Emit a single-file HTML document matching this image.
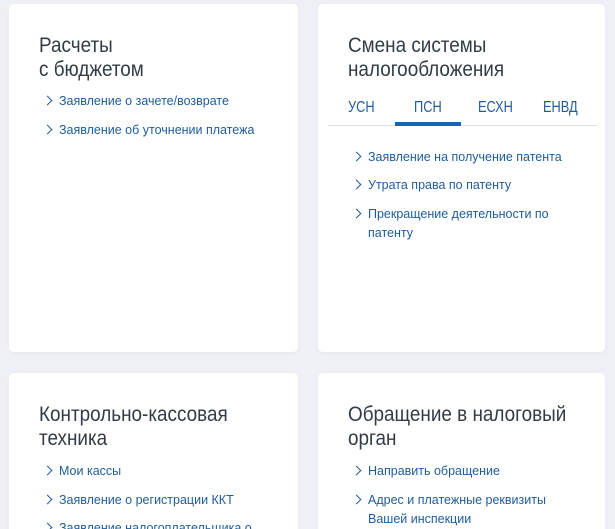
<!DOCTYPE html>
<html><head><meta charset="utf-8"><style>
*{margin:0;padding:0;box-sizing:border-box}
html,body{width:615px;height:529px;overflow:hidden}
body{background:#eef0f5;position:relative;font-family:"Liberation Sans",sans-serif}
.card{position:absolute;background:#fff;border-radius:5px;box-shadow:0 1px 4px rgba(0,0,0,.04)}
h2{position:absolute;font-weight:normal;font-size:21px;line-height:24px;color:#333c46;transform:scaleX(0.9);transform-origin:0 0;white-space:nowrap}
.l{position:absolute;font-size:12.5px;line-height:19px;color:#1f5c9b;white-space:nowrap}
.l:before{content:"";position:absolute;left:-15px;top:5px;width:6px;height:6px;border-right:1.4px solid #1f5c9b;border-top:1.4px solid #1f5c9b;transform:rotate(45deg)}
.tab{position:absolute;top:99px;font-size:16px;color:#1f5c9b;transform:scaleX(0.8);transform-origin:0 0}
</style></head><body>
<div class="card" style="left:9px;top:4px;width:289px;height:348px"></div>
<div class="card" style="left:318px;top:4px;width:287px;height:348px"></div>
<div class="card" style="left:9px;top:373px;width:289px;height:170px"></div>
<div class="card" style="left:318px;top:373px;width:287px;height:170px"></div>

<h2 style="left:39px;top:34px">Расчеты<br>с бюджетом</h2>
<div class="l" style="left:59px;top:92px">Заявление о зачете/возврате</div>
<div class="l" style="left:59px;top:121px">Заявление об уточнении платежа</div>

<h2 style="left:348px;top:34px">Смена системы<br>налогообложения</h2>
<div class="tab" style="left:348px">УСН</div>
<div class="tab" style="left:414px">ПСН</div>
<div class="tab" style="left:478px">ЕСХН</div>
<div class="tab" style="left:543px">ЕНВД</div>
<div style="position:absolute;left:328px;top:125px;width:269px;height:1px;background:#dcdfe3"></div>
<div style="position:absolute;left:395px;top:122px;width:66px;height:4px;background:#1565b0"></div>
<div class="l" style="left:368px;top:148px">Заявление на получение патента</div>
<div class="l" style="left:368px;top:176px">Утрата права по патенту</div>
<div class="l" style="left:368px;top:205px">Прекращение деятельности по<br>патенту</div>

<h2 style="left:39px;top:403px">Контрольно-кассовая<br>техника</h2>
<div class="l" style="left:59px;top:462px">Мои кассы</div>
<div class="l" style="left:59px;top:491px">Заявление о регистрации ККТ</div>
<div class="l" style="left:59px;top:519px">Заявление налогоплательщика о</div>

<h2 style="left:348px;top:403px">Обращение в налоговый<br>орган</h2>
<div class="l" style="left:368px;top:462px">Направить обращение</div>
<div class="l" style="left:368px;top:491px">Адрес и платежные реквизиты<br>Вашей инспекции</div>
</body></html>
